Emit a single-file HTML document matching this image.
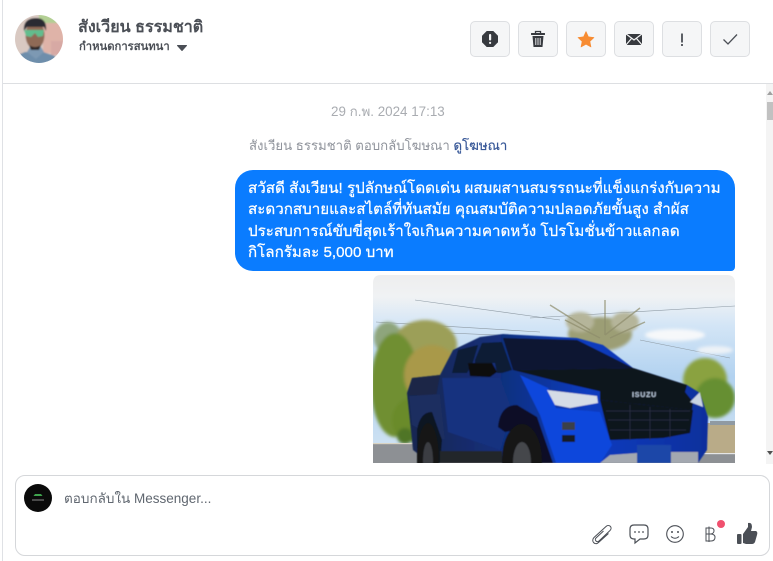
<!DOCTYPE html>
<html><head><meta charset="utf-8">
<style>
*{box-sizing:border-box}
html,body{margin:0;padding:0;width:773px;height:561px;overflow:hidden;background:#fff;font-family:"Liberation Sans","Noto Sans CJK SC",sans-serif}
.t{position:absolute;white-space:nowrap}
.b{position:absolute;top:21px;width:40px;height:36px;background:#f5f6f7;border:1px solid #dddfe2;border-radius:5px}
.b svg{position:absolute;left:0;top:0}
#scroll{position:absolute;left:766px;top:84px;width:7px;height:380px;background:#f4f4f4}
</style></head><body>
<div style="position:absolute;left:2px;top:0;width:1px;height:561px;background:#dfe1e5"></div>
<div style="position:absolute;left:3px;top:83px;width:770px;height:1px;background:#dddfe2"></div>

<svg style="position:absolute;left:15px;top:15px" width="48" height="48" viewBox="0 0 48 48">
<defs><clipPath id="av"><circle cx="24" cy="24" r="24"/></clipPath><filter id="bl"><feGaussianBlur stdDeviation=".8"/></filter></defs>
<g clip-path="url(#av)"><g filter="url(#bl)">
<rect x="-2" y="-2" width="52" height="52" fill="#d9c9c2"/>
<rect x="28" y="8" width="22" height="30" fill="#dfb3a8"/>
<rect x="24" y="-2" width="18" height="10" fill="#b3cf94"/>
<rect x="36" y="26" width="14" height="14" fill="#d7a9a4"/>
<path d="M-2 50V42L10 37H28L40 41V50Z" fill="#6e8eab"/>
<path d="M12 37L21 44L29 37L26 32H15Z" fill="#7d99b3"/>
<ellipse cx="20" cy="20" rx="9.500" ry="14" fill="#8f6a56"/>
<path d="M9 16C8 7 13 3 21 3C29 3 32 8 31 16L29 12H12Z" fill="#2c2a33"/>
<path d="M9 15H29L28 21L23 22L20 18L16 22L11 21Z" fill="#62bd8e"/>
<path d="M14 30Q20 34 26 30L24 35H16Z" fill="#2e2826"/>
</g></g></svg>

<div class="t" style="left:78px;top:17px;font-size:16.1px;font-weight:bold;color:#4b4f56;line-height:20px">สังเวียน ธรรมชาติ</div>
<div class="t" style="left:79px;top:39px;font-size:11.250px;font-weight:bold;color:#4b4f56;line-height:16px">กำหนดการสนทนา</div>
<svg style="position:absolute;left:176px;top:44px" width="12" height="8"><path d="M1.500 1.500H10.500L6 6.500Z" fill="#4b4f56" stroke="#4b4f56" stroke-linejoin="round"/></svg>

<div class="b" style="left:470px"><svg width="38" height="34"><path d="M15.700 9H22.300L27 13.700V20.300L22.300 25H15.700L11 20.300V13.700Z" fill="#373a3f"/><rect x="18" y="12" width="2.200" height="6.500" rx="1" fill="#f5f6f7"/><rect x="18" y="19.800" width="2.200" height="2.200" rx="1.100" fill="#f5f6f7"/></svg></div>
<div class="b" style="left:518px"><svg width="38" height="34"><path d="M16.500 11V9.500H21.500V11" fill="none" stroke="#373a3f" stroke-width="1.300"/><rect x="12" y="11" width="14" height="2" rx=".5" fill="#373a3f"/><path d="M13.500 14H24.500L23.500 25H14.500Z" fill="#373a3f"/><path d="M16.800 16V23M19 16V23M21.200 16V23" stroke="#f5f6f7" stroke-width=".9"/></svg></div>
<div class="b" style="left:566px"><svg width="38" height="34"><path d="M19 9.500L21.400 14.800L27 15.500L22.900 19.400L24 25L19 22.200L14 25L15.100 19.400L11 15.500L16.600 14.800Z" fill="#f78c33" stroke="#f78c33" stroke-width=".6" stroke-linejoin="round"/></svg></div>
<div class="b" style="left:614px"><svg width="38" height="34"><rect x="11" y="12" width="16" height="11" fill="#373a3f"/><path d="M10.500 11.500L19 18L27.500 11.500M10.500 23.500L16.500 16.500M27.500 23.500L21.500 16.500" fill="none" stroke="#f5f6f7" stroke-width="1.200"/></svg></div>
<div class="b" style="left:662px"><svg width="38" height="34"><path d="M19 11.500V20.500" stroke="#4b4f56" stroke-width="1.800"/><rect x="18.100" y="22" width="1.800" height="2" fill="#4b4f56"/></svg></div>
<div class="b" style="left:710px"><svg width="38" height="34"><path d="M12.500 17.500L17 22L26 12.500" fill="none" stroke="#4b4f56" stroke-width="1.300"/></svg></div>

<div class="t" style="left:331px;top:104px;font-size:13.4px;color:#a9acb1;line-height:16px">29 ก.พ. 2024 17:13</div>
<div class="t" style="left:249px;top:138px;font-size:13.2px;color:#90949c;line-height:16px">สังเวียน ธรรมชาติ ตอบกลับโฆษณา <span style="color:#385898;-webkit-text-stroke:.2px #385898">ดูโฆษณา</span></div>

<div style="position:absolute;left:235px;top:170px;width:500px;height:101px;background:#0a7cff;border-radius:18px 18px 4px 18px"></div>
<div class="t" style="left:248px;top:178px;font-size:15.150px;color:#fff;line-height:21.3px;-webkit-text-stroke:.25px #fff">สวัสดี สังเวียน! รูปลักษณ์โดดเด่น ผสมผสานสมรรถนะที่แข็งแกร่งกับความ<br>สะดวกสบายและสไตล์ที่ทันสมัย คุณสมบัติความปลอดภัยขั้นสูง สำผัส<br>ประสบการณ์ขับขี่สุดเร้าใจเกินความคาดหวัง โปรโมชั่นข้าวแลกลด<br>กิโลกรัมละ 5,000 บาท</div>

<svg style="position:absolute;left:373px;top:275px" width="362" height="188" viewBox="373 275 362 188">
<defs>
<linearGradient id="sky" x1="0" y1="0" x2="0" y2="1"><stop offset="0" stop-color="#eeeeee"/><stop offset=".13" stop-color="#f0f2f4"/><stop offset=".3" stop-color="#d3e5f6"/><stop offset=".6" stop-color="#b2d2f0"/><stop offset="1" stop-color="#cde1f2"/></linearGradient>
<linearGradient id="body" x1="0" y1="0" x2="1" y2="0"><stop offset="0" stop-color="#14264f"/><stop offset=".3" stop-color="#122f7a"/><stop offset=".6" stop-color="#0d3cc0"/><stop offset="1" stop-color="#0c2f9c"/></linearGradient>
<clipPath id="ic"><path d="M381 275H727Q735 275 735 283V463H373V283Q373 275 381 275Z"/></clipPath>
<filter id="f1" x="-30%" y="-30%" width="160%" height="160%"><feGaussianBlur stdDeviation="1.600"/></filter>
<filter id="f2"><feGaussianBlur stdDeviation=".5"/></filter>
</defs>
<g clip-path="url(#ic)">
<rect x="373" y="275" width="362" height="170" fill="url(#sky)"/>
<g stroke="#8e9aa4" stroke-width=".6" fill="none"><path d="M415 300L560 320M376 322L540 332M378 330L520 336M640 340L730 358M530 318L735 306"/></g>
<g filter="url(#f1)">
<ellipse cx="675" cy="335" rx="30" ry="6" fill="#f6f8fa"/>
<ellipse cx="715" cy="350" rx="18" ry="4" fill="#edf2f7"/>
<ellipse cx="600" cy="334" rx="32" ry="17" fill="#9c9e74"/>
<ellipse cx="580" cy="322" rx="14" ry="10" fill="#b5b59a"/>
<ellipse cx="625" cy="322" rx="14" ry="10" fill="#b5b59a"/>
<ellipse cx="388" cy="338" rx="14" ry="16" fill="#8ea57b"/>
<ellipse cx="425" cy="345" rx="32" ry="25" fill="#9c9f58"/>
<ellipse cx="395" cy="385" rx="24" ry="52" fill="#6f8f32"/>
<ellipse cx="432" cy="375" rx="28" ry="30" fill="#a9994a"/>
<ellipse cx="412" cy="420" rx="20" ry="22" fill="#6b8b2c"/>
<ellipse cx="705" cy="380" rx="22" ry="22" fill="#8aa23f"/>
<ellipse cx="715" cy="398" rx="20" ry="20" fill="#668f30"/>
<ellipse cx="405" cy="436" rx="8" ry="8" fill="#4f7428"/>
</g>
<path d="M550 305L590 330M640 308L605 335M605 300V335M565 320L600 338M645 322L610 338" stroke="#8e8d6c" stroke-width="1.500" opacity=".7"/>
<rect x="373" y="443" width="362" height="20" fill="#8d9094"/>
<rect x="700" y="423" width="35" height="30" fill="#b9ab88"/>
<rect x="710" y="421" width="25" height="4" fill="#8f9aa3"/>
<rect x="700" y="453" width="35" height="10" fill="#8d9094"/>
<rect x="700" y="453" width="35" height="1.200" fill="#e5e5e5"/>
<rect x="373" y="443" width="40" height="1.200" fill="#d9d3c2"/>
<g filter="url(#f2)">
<path d="M407 393L412 378L440 375L453 350L480 337L503 334L577 338L603 345L633 368L687 385L700 393L708 417L707 450L698 463H430L413 450Z" fill="url(#body)"/>
<path d="M412 378L440 375L436 397L409 395Z" fill="#1a2746"/>
<path d="M409 396L440 394L445 440L425 432L412 425Z" fill="#1a2d60"/>
<path d="M442 378L500 378L512 410L500 450L448 432Z" fill="#12307f"/>
<path d="M520 375L548 388L556 408L600 412L612 445L600 463H556L540 415Z" fill="#0c46dc"/>
<path d="M452 373L458 350L478 345L473 362L467 373Z" fill="#0e1a36"/>
<path d="M475 360L482 343L502 342L512 370L502 373H497L495 363H475Z" fill="#0f1a34"/>
<path d="M503 338L577 340L633 368L513 370Z" fill="#0b1530"/>
<path d="M513 370L633 368L687 385L685 392L603 392L560 382Z" fill="#10141e"/>
<path d="M468 363H492L497 372L490 377L470 376Z" fill="#080a10"/>
<path d="M547 390L597 396L598 403L570 408L555 405Z" fill="#d5dce6"/>
<path d="M600 391L685 392L693 402L692 410L600 400Z" fill="#10141e"/>
<path d="M600 400L693 410L690 433L663 438L610 440Z" fill="#0e121c"/>
<path d="M606 411H690M608 420H689M610 430H686M630 405V440M650 407V440M670 409V438" stroke="#2c3344" stroke-width=".8"/>
<path d="M690 402L700 392L703 407Z" fill="#c9d4e2"/>
<rect x="562" y="422" width="13" height="8" fill="#3a3f4a"/>
<rect x="562" y="435" width="13" height="7" fill="#151a26"/>
<path d="M600 463L610 455L637 453V463ZM671 452L698 452V463H671Z" fill="#a3a8b0"/>
<rect x="637" y="445" width="34" height="18" fill="#1c47a8"/>
<text x="632" y="397" font-size="7" font-weight="bold" fill="#b9cadd" font-family="Liberation Sans" letter-spacing=".8">ISUZU</text>
<path d="M498 427Q500 405 517 405L537 417L553 463H540L528 428L505 432Z" fill="#0b1128"/>
<path d="M417 430Q420 412 432 412L442 440L440 463H417Z" fill="#0d1224"/>
<ellipse cx="428" cy="458" rx="11" ry="35" fill="#121317"/>
<ellipse cx="428" cy="460" rx="5" ry="18" fill="#3a3c42"/>
<ellipse cx="522" cy="460" rx="20" ry="36" fill="#121317"/>
<ellipse cx="522" cy="462" rx="9" ry="20" fill="#45474c"/>
<rect x="440" y="451" width="62" height="12" fill="#22252c"/>
</g>
</g></svg>

<div id="scroll">
<svg style="position:absolute;left:0;top:0" width="7" height="380"><path d="M4 7L7 11H1Z" fill="#a0a0a0"/><rect x="1" y="18" width="6" height="18" fill="#c1c1c1"/><path d="M1 367H7L4 371Z" fill="#505050"/></svg>
</div>

<div style="position:absolute;left:15px;top:475px;width:755px;height:81px;border:1px solid #d5d7da;border-radius:10px;background:#fff"></div>
<svg style="position:absolute;left:24px;top:484px" width="28" height="28"><circle cx="14" cy="14" r="14" fill="#0a0a0a"/><path d="M9.500 12L11 10H17L18.500 12Z" fill="#3fa34d"/><rect x="8" y="15.500" width="12" height="1" fill="#8a8a8a"/></svg>
<div class="t" style="left:64px;top:490px;font-size:13.5px;color:#606770;line-height:18px">ตอบกลับใน Messenger...</div>

<svg style="position:absolute;left:590px;top:520px" width="170" height="30" viewBox="590 520 170 30">
<path d="M604 531.500L596.500 538.500C594.500 540.500 597.500 543.500 599.500 541.500L610.500 531C613.500 528 609.500 524 606.500 527L594.500 538C591 541.500 595.500 546.500 599 543L609 534" transform="translate(-.5,-.5)" fill="none" stroke="#4b4f56" stroke-width="1"/>
<path d="M634 525H644Q648 525 648 529V535Q648 539 644 539H640L635 543V539H634Q630 539 630 535V529Q630 525 634 525Z" fill="none" stroke="#4b4f56" stroke-width="1.200"/>
<circle cx="635" cy="532" r=".9" fill="#4b4f56"/><circle cx="639" cy="532" r=".9" fill="#4b4f56"/><circle cx="643" cy="532" r=".9" fill="#4b4f56"/>
<circle cx="675" cy="534" r="8.300" fill="none" stroke="#4b4f56" stroke-width="1.100"/>
<circle cx="672" cy="532" r="1" fill="#4b4f56"/><circle cx="678" cy="532" r="1" fill="#4b4f56"/>
<path d="M671 536.500Q675 540 679 536.500" fill="none" stroke="#4b4f56" stroke-width="1"/>
<path d="M709 526.500V542M706 528H711Q714 528 714 530.800Q714 533.500 711 534Q715 534.300 715 537.300Q715 541 711 541H706ZM706 534H711" fill="none" stroke="#4b4f56" stroke-width="1"/>
<circle cx="721" cy="524" r="4" fill="#f0506e"/>
<rect x="737" y="534" width="4.500" height="10" rx="1" fill="#4b4f56"/>
<path d="M743 534L748 527V523Q752 522 752 527L751 531H756Q758 532 757 535L755 542Q754 544 752 544H746L743 543Z" fill="#4b4f56"/>
</svg>
</body></html>
